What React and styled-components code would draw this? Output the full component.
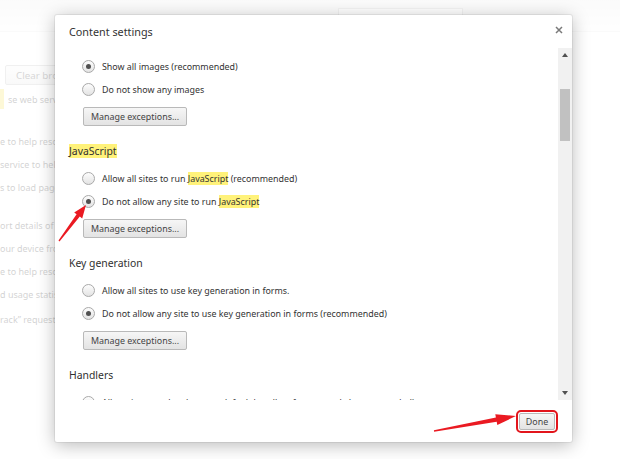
import React from 'react';
import styled, { createGlobalStyle } from 'styled-components';

const GlobalStyle = createGlobalStyle`
  html, body { margin: 0; padding: 0; background: #fff; }
  * { box-sizing: border-box; }
`;

const Page = styled.div`
  position: relative;
  width: 620px;
  height: 459px;
  overflow: hidden;
  background: #fff;
  font-family: "Noto Sans", "Open Sans", sans-serif;
  color: #333;
`;

/* faded settings page behind the dialog */
const BgPage = styled.div`
  display: flex;
  flex-direction: column;
`;

const TopBar = styled.div`
  height: 32px;
  background: linear-gradient(#e9e9e9, #fbfbfb);
  border-bottom: 1px solid #e8e8e8;
  padding: 8px 0 0 338px;
`;

const SearchBox = styled.div`
  width: 125px;
  height: 22px;
  border: 1px solid #c8c8c8;
  background: #fff;
`;

const BgBody = styled.div`
  padding-top: 33px;
  display: flex;
  flex-direction: column;
`;

const BgButtons = styled.div`
  display: flex;
  gap: 6px;
  margin-left: -99px;
`;

const BgButton = styled.div`
  width: ${({ $w }) => $w}px;
  height: 20px;
  padding: 0 10px;
  display: flex;
  align-items: center;
  font-size: 9.8px;
  color: #444;
  border: 1px solid #bbb;
  border-radius: 2px;
  background: linear-gradient(#f7f7f7, #e4e4e4);
  white-space: nowrap;
  overflow: hidden;
`;

const BgLine = styled.div`
  height: ${({ $h }) => $h || 23}px;
  margin-top: ${({ $gap }) => $gap || 0}px;
  display: flex;
  align-items: center;
  font-size: 9px;
  color: #333;
  white-space: nowrap;
`;

const BgMark = styled.span`
  display: inline-block;
  width: 4px;
  height: 20px;
  margin-right: 4px;
  background: #f6e04a;
`;

const Dim = styled.div`
  position: absolute;
  inset: 0;
  background: rgba(255, 255, 255, 0.78);
`;

/* dialog */
const Dialog = styled.div`
  position: absolute;
  left: 55px;
  top: 15px;
  width: 517px;
  height: 427px;
  background: #fff;
  border-radius: 2px;
  box-shadow: 0 3px 18px rgba(0, 0, 0, 0.28), 0 0 0 1px rgba(0, 0, 0, 0.06);
  display: flex;
  flex-direction: column;
`;

const Header = styled.div`
  height: 33px;
  display: flex;
  justify-content: space-between;
  align-items: flex-start;
  padding: 8px 9px 0 14px;
`;

const Title = styled.div`
  font-size: 10.8px;
  line-height: 18px;
  color: #333;
`;

const Close = styled.div`
  width: 8px;
  height: 8px;
  margin-top: 3px;
  display: flex;
`;

const Body = styled.div`
  flex: 1;
  display: flex;
  min-height: 0;
`;

const Content = styled.div`
  flex: 1;
  overflow: hidden;
  padding-left: 14px;
`;

const Scrolled = styled.div`
  margin-top: -17px;
`;

const Section = styled.div`
  margin-bottom: 17px;
`;

const SectionTitle = styled.div`
  font-size: 10.4px;
  line-height: 16px;
  height: 16px;
  margin-bottom: 8px;
  color: #303030;
`;

const Mark = styled.span`
  background: #fff27a;
`;

const RadioRow = styled.div`
  height: 23px;
  display: flex;
  align-items: center;
  gap: 7px;
  padding-left: 13px;
  font-size: 8.9px;
  color: #333;
  white-space: nowrap;
`;

const Radio = styled.span`
  width: 13px;
  height: 13px;
  flex: none;
  border-radius: 50%;
  border: 1px solid #a9a9a9;
  background: linear-gradient(#fdfdfd, #e3e3e3);
  display: flex;
  align-items: center;
  justify-content: center;

  &::after {
    content: '';
    width: 5px;
    height: 5px;
    border-radius: 50%;
    background: #505050;
    display: ${({ $checked }) => ($checked ? 'block' : 'none')};
  }
`;

const Button = styled.div`
  height: 19px;
  margin: ${({ $inline }) => ($inline ? '0' : '6px 0 0 14px')};
  padding: 0 7px;
  display: inline-flex;
  align-items: center;
  font-size: 8.9px;
  color: #444;
  border: 1px solid #b9b9b9;
  border-radius: 2px;
  background: linear-gradient(#f6f6f6, #e3e3e3);
  white-space: nowrap;
`;

const DoneButton = styled(Button)`
  height: 17px;
  width: 36px;
  padding: 0;
  justify-content: center;
  outline: 2px solid #e2151c;
  outline-offset: 1px;
`;

const Scrollbar = styled.div`
  width: 14px;
  background: #f1f1f1;
  display: flex;
  flex-direction: column;
`;

const ScrollArrow = styled.div`
  height: 14px;
  display: flex;
  align-items: center;
  justify-content: center;

  &::after {
    content: '';
    border-left: 3.5px solid transparent;
    border-right: 3.5px solid transparent;
    ${({ $down }) =>
      $down ? 'border-top: 4px solid #505050;' : 'border-bottom: 4px solid #505050;'}
  }
`;

const Track = styled.div`
  flex: 1;
  padding: 27px 2px 0;
`;

const Thumb = styled.div`
  height: 52px;
  background: #c1c1c1;
`;

const Footer = styled.div`
  height: 42px;
  display: flex;
  justify-content: flex-end;
  align-items: center;
  padding-right: 17px;
`;

const Annotations = styled.svg`
  position: absolute;
  inset: 0;
  pointer-events: none;
`;

function arrowPoints([tx, ty], [hx, hy], headLen, headW, tailW, neckW) {
  const dx = hx - tx;
  const dy = hy - ty;
  const len = Math.hypot(dx, dy);
  const ux = dx / len;
  const uy = dy / len;
  const nx = -uy;
  const ny = ux;
  const bx = hx - ux * headLen;
  const by = hy - uy * headLen;
  const p = (x, y, w) => [x + (nx * w) / 2, y + (ny * w) / 2];
  const pts = [
    p(tx, ty, tailW),
    p(bx, by, neckW),
    p(bx, by, headW),
    [hx, hy],
    p(bx, by, -headW),
    p(bx, by, -neckW),
    p(tx, ty, -tailW),
  ];
  return pts.map(([x, y]) => `${x.toFixed(1)},${y.toFixed(1)}`).join(' ');
}

const sections = [
  {
    title: 'Images',
    options: [
      { label: 'Show all images (recommended)', checked: true },
      { label: 'Do not show any images' },
    ],
  },
  {
    title: <Mark>JavaScript</Mark>,
    options: [
      {
        label: (
          <>
            Allow all sites to run <Mark>JavaScript</Mark> (recommended)
          </>
        ),
      },
      {
        label: (
          <>
            Do not allow any site to run <Mark>JavaScript</Mark>
          </>
        ),
        checked: true,
      },
    ],
  },
  {
    title: 'Key generation',
    options: [
      { label: 'Allow all sites to use key generation in forms.' },
      {
        label: 'Do not allow any site to use key generation in forms (recommended)',
        checked: true,
      },
    ],
  },
  {
    title: 'Handlers',
    options: [
      {
        label: 'Allow sites to ask to become default handlers for protocols (recommended)',
        checked: true,
      },
      { label: 'Do not allow any site to handle protocols' },
    ],
  },
];

export default function App() {
  return (
    <Page>
      <GlobalStyle />
      <BgPage>
        <TopBar>
          <SearchBox />
        </TopBar>
        <BgBody>
          <BgButtons>
            <BgButton $w={98}>Content settings...</BgButton>
            <BgButton $w={120}>Clear browsing data...</BgButton>
          </BgButtons>
          <BgLine $h={20} $gap={4}>
            <BgMark />
            se web services to improve your browsing experience.
          </BgLine>
          <BgLine $gap={21}>e to help resolve navigation errors</BgLine>
          <BgLine>service to help complete searches</BgLine>
          <BgLine>s to load pages more quickly</BgLine>
          <BgLine $gap={15}>ort details of possible security incidents</BgLine>
          <BgLine>our device from dangerous sites</BgLine>
          <BgLine>e to help resolve spelling errors</BgLine>
          <BgLine>d usage statistics and crash reports</BgLine>
          <BgLine $gap={2}>rack” request with your browsing traffic</BgLine>
        </BgBody>
      </BgPage>
      <Dim />

      <Dialog>
        <Header>
          <Title>Content settings</Title>
          <Close>
            <svg width="8" height="8" viewBox="0 0 8 8">
              <path d="M1 1 L7 7 M7 1 L1 7" stroke="#7a7a7a" strokeWidth="1.5" />
            </svg>
          </Close>
        </Header>
        <Body>
          <Content>
            <Scrolled>
              {sections.map((s, i) => (
                <Section key={i}>
                  <SectionTitle>{s.title}</SectionTitle>
                  {s.options.map((o, j) => (
                    <RadioRow key={j}>
                      <Radio $checked={o.checked} />
                      <span>{o.label}</span>
                    </RadioRow>
                  ))}
                  <Button>Manage exceptions...</Button>
                </Section>
              ))}
            </Scrolled>
          </Content>
          <Scrollbar>
            <ScrollArrow />
            <Track>
              <Thumb />
            </Track>
            <ScrollArrow $down />
          </Scrollbar>
        </Body>
        <Footer>
          <DoneButton $inline>Done</DoneButton>
        </Footer>
      </Dialog>

      <Annotations width="620" height="459" viewBox="0 0 620 459">
        <polygon points={arrowPoints([59, 241], [86, 205], 13, 10, 1.2, 4)} fill="#ea1a22" />
        <polygon points={arrowPoints([434, 431], [516, 416], 20, 11, 1.5, 4.5)} fill="#ea1a22" />
      </Annotations>
    </Page>
  );
}
